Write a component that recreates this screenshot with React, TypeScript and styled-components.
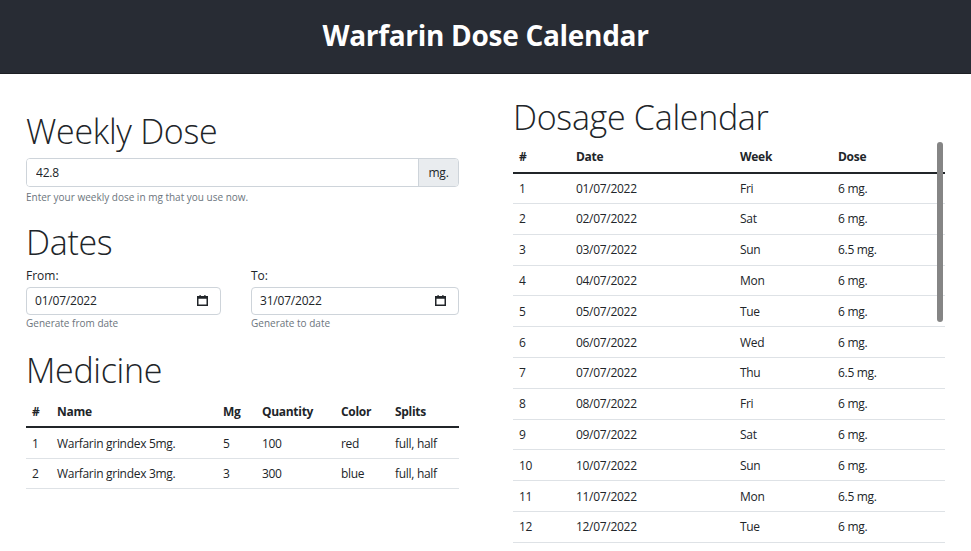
import React from 'react';
import styled, { createGlobalStyle } from 'styled-components';

const GlobalStyle = createGlobalStyle`
  html, body {
    margin: 0;
    padding: 0;
    background: #fff;
    font-family: "Open Sans", "Noto Sans", Arial, sans-serif;
    color: #212529;
    overflow: hidden;
  }
  * { box-sizing: border-box; }
`;

const Header = styled.header`
  height: 74px;
  padding-bottom: 4px;
  background: #282c34;
  border-bottom: 1px solid #1c1f24;
  display: flex;
  align-items: center;
  justify-content: center;
`;

const Title = styled.h1`
  margin: 0;
  color: #fff;
  font-size: 28px;
  font-weight: 700;
  letter-spacing: -0.3px;
`;

const Main = styled.main`
  display: grid;
  grid-template-columns: 433px 432px;
  column-gap: 54px;
  padding: 0 26px;
  align-items: start;
`;

const Column = styled.section<{ $top: number }>`
  padding-top: ${({ $top }) => $top}px;
  display: flex;
  flex-direction: column;
`;

const Heading = styled.h2<{ $mt?: number; $mb?: number }>`
  margin: ${({ $mt }) => $mt ?? 0}px 0 ${({ $mb }) => $mb ?? 6}px;
  font-size: 34px;
  font-weight: 300;
  line-height: 1.2;
  letter-spacing: -0.3px;
  color: #212529;
`;

const InputGroup = styled.div`
  display: flex;
  height: 29px;
  border: 1px solid #ced4da;
  border-radius: 4px;
  overflow: hidden;
`;

const TextField = styled.input`
  flex: 1;
  border: none;
  outline: none;
  padding: 0 9px;
  font: inherit;
  font-size: 12px;
  letter-spacing: -0.2px;
  color: #212529;
  background: #fff;
`;

const Addon = styled.span`
  width: 40px;
  display: flex;
  align-items: center;
  justify-content: center;
  background: #e9ecef;
  border-left: 1px solid #ced4da;
  font-size: 12px;
  letter-spacing: -0.2px;
`;

const Help = styled.div<{ $mt?: number }>`
  margin-top: ${({ $mt }) => $mt ?? 3}px;
  font-size: 10px;
  line-height: 15px;
  color: #6c757d;
`;

const DateRow = styled.div`
  display: grid;
  grid-template-columns: 195px 208px;
  column-gap: 30px;
`;

const Field = styled.div`
  display: flex;
  flex-direction: column;
`;

const Label = styled.label`
  font-size: 12px;
  line-height: 18px;
  margin-bottom: 2px;
`;

const DateBox = styled.div`
  height: 28px;
  border: 1px solid #ced4da;
  border-radius: 4px;
  display: flex;
  align-items: center;
  justify-content: space-between;
  padding: 0 12px 0 8px;
  font-size: 12px;
  letter-spacing: -0.2px;
`;

const Table = styled.table`
  width: 100%;
  border-collapse: collapse;
  font-size: 12px;
  letter-spacing: -0.3px;
  table-layout: fixed;
`;

const Th = styled.th<{ $w?: number }>`
  width: ${({ $w }) => ($w ? `${$w}px` : 'auto')};
  text-align: left;
  font-weight: 700;
  padding: 0 6px;
  height: 31px;
  border-bottom: 2px solid #212529;
`;

const Td = styled.td`
  padding: 0 6px;
  height: 30.8px;
  border-bottom: 1px solid #dee2e6;
  white-space: nowrap;
`;

const ScrollArea = styled.div`
  position: relative;
  height: 401px;
  overflow: hidden;
`;

const Thumb = styled.div`
  position: absolute;
  top: 0;
  right: 2px;
  width: 6px;
  height: 180px;
  border-radius: 3px;
  background: #858585;
`;

function CalendarIcon() {
  return (
    <svg width="11" height="11" viewBox="0 0 11 11" aria-hidden="true">
      <rect x="0.75" y="1.75" width="9.5" height="8.5" fill="none" stroke="#212529" strokeWidth="1.5" />
      <rect x="0.75" y="1.75" width="9.5" height="2" fill="#212529" />
      <rect x="2.5" y="0" width="1.2" height="2" fill="#212529" />
      <rect x="7.3" y="0" width="1.2" height="2" fill="#212529" />
    </svg>
  );
}

const medicines = [
  { name: 'Warfarin grindex 5mg.', mg: 5, qty: 100, color: 'red', splits: 'full, half' },
  { name: 'Warfarin grindex 3mg.', mg: 3, qty: 300, color: 'blue', splits: 'full, half' },
];

const weekdays = ['Fri', 'Sat', 'Sun', 'Mon', 'Tue', 'Wed', 'Thu'];

// only the rows visible in the scrolled-to-top view
const calendar = Array.from({ length: 12 }, (_, i) => {
  const day = String(i + 1).padStart(2, '0');
  return {
    n: i + 1,
    date: `${day}/07/2022`,
    week: weekdays[i % 7],
    dose: (i + 2) % 4 === 0 ? '6.5 mg.' : '6 mg.',
  };
});

export default function App() {
  return (
    <>
      <GlobalStyle />
      <Header>
        <Title>Warfarin Dose Calendar</Title>
      </Header>
      <Main>
        <Column $top={37}>
          <Heading>Weekly Dose</Heading>
          <InputGroup>
            <TextField defaultValue="42.8" />
            <Addon>mg.</Addon>
          </InputGroup>
          <Help>Enter your weekly dose in mg that you use now.</Help>

          <Heading $mt={17} $mb={4}>Dates</Heading>
          <DateRow>
            <Field>
              <Label>From:</Label>
              <DateBox>
                <span>01/07/2022</span>
                <CalendarIcon />
              </DateBox>
              <Help $mt={1}>Generate from date</Help>
            </Field>
            <Field>
              <Label>To:</Label>
              <DateBox>
                <span>31/07/2022</span>
                <CalendarIcon />
              </DateBox>
              <Help $mt={1}>Generate to date</Help>
            </Field>
          </DateRow>

          <Heading $mt={19}>Medicine</Heading>
          <Table>
            <thead>
              <tr>
                <Th $w={25}>#</Th>
                <Th $w={166}>Name</Th>
                <Th $w={39}>Mg</Th>
                <Th $w={79}>Quantity</Th>
                <Th $w={54}>Color</Th>
                <Th>Splits</Th>
              </tr>
            </thead>
            <tbody>
              {medicines.map((m, i) => (
                <tr key={m.name}>
                  <Td>{i + 1}</Td>
                  <Td>{m.name}</Td>
                  <Td>{m.mg}</Td>
                  <Td>{m.qty}</Td>
                  <Td>{m.color}</Td>
                  <Td>{m.splits}</Td>
                </tr>
              ))}
            </tbody>
          </Table>
        </Column>

        <Column $top={23}>
          <Heading $mb={4}>Dosage Calendar</Heading>
          <ScrollArea>
            <Table>
              <thead>
                <tr>
                  <Th $w={57}>#</Th>
                  <Th $w={164}>Date</Th>
                  <Th $w={98}>Week</Th>
                  <Th>Dose</Th>
                </tr>
              </thead>
              <tbody>
                {calendar.map((r) => (
                  <tr key={r.n}>
                    <Td>{r.n}</Td>
                    <Td>{r.date}</Td>
                    <Td>{r.week}</Td>
                    <Td>{r.dose}</Td>
                  </tr>
                ))}
              </tbody>
            </Table>
            <Thumb />
          </ScrollArea>
        </Column>
      </Main>
    </>
  );
}
